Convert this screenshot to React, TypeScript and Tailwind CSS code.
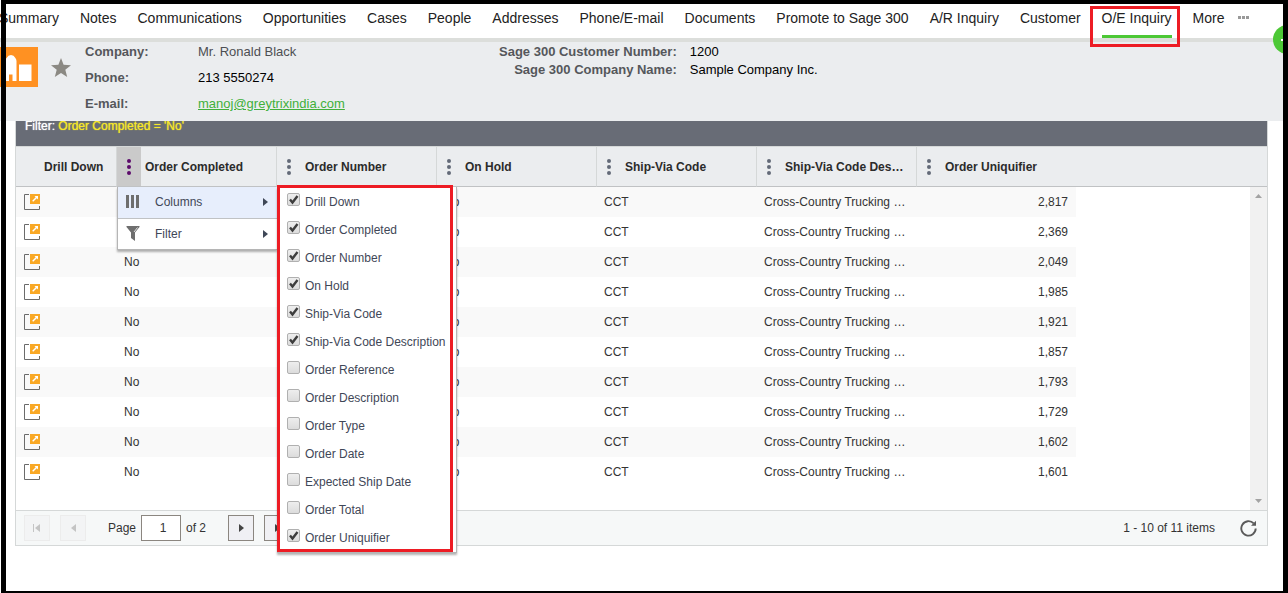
import React, { useState } from "react";

// ========== Types ==========

interface GridColumn {
  id: string;
  label: string;
  visible: boolean;
}

interface OrderRow {
  completed: string;
  onHold: string;
  shipVia: string;
  shipViaDesc: string;
  uniquifier: string;
}

// ========== Constants ==========

const TABS = [
  "Summary",
  "Notes",
  "Communications",
  "Opportunities",
  "Cases",
  "People",
  "Addresses",
  "Phone/E-mail",
  "Documents",
  "Promote to Sage 300",
  "A/R Inquiry",
  "Customer",
  "O/E Inquiry",
  "More",
];

const HEADERS = [
  "Order Completed",
  "Order Number",
  "On Hold",
  "Ship-Via Code",
  "Ship-Via Code Description",
  "Order Uniquifier",
];

const COLUMNS: GridColumn[] = [
  { id: "drill", label: "Drill Down", visible: true },
  { id: "completed", label: "Order Completed", visible: true },
  { id: "number", label: "Order Number", visible: true },
  { id: "hold", label: "On Hold", visible: true },
  { id: "via", label: "Ship-Via Code", visible: true },
  { id: "viaDesc", label: "Ship-Via Code Description", visible: true },
  { id: "reference", label: "Order Reference", visible: false },
  { id: "description", label: "Order Description", visible: false },
  { id: "type", label: "Order Type", visible: false },
  { id: "date", label: "Order Date", visible: false },
  { id: "shipDate", label: "Expected Ship Date", visible: false },
  { id: "total", label: "Order Total", visible: false },
  { id: "uniquifier", label: "Order Uniquifier", visible: true },
];

const ROWS: OrderRow[] = [
  "2,817",
  "2,369",
  "2,049",
  "1,985",
  "1,921",
  "1,857",
  "1,793",
  "1,729",
  "1,602",
  "1,601",
].map((uniquifier) => ({
  completed: "No",
  onHold: "No",
  shipVia: "CCT",
  shipViaDesc: "Cross-Country Trucking Company",
  uniquifier,
}));

// ========== Icons ==========

function CompanyIcon() {
  return (
    <svg width="38" height="40" viewBox="0 0 38 40" aria-hidden="true">
      <rect width="38" height="40" fill="#ff9122" />
      <path d="M5 34V14q0-2 2-3.500Q8 8 11 8t4 2.500q1.500 1.500 1.500 3.500v20H12.500v-6.500H9V34z" fill="#fff" />
      <rect x="19" y="17.500" width="12.500" height="16.500" fill="#fff" />
    </svg>
  );
}

function StarIcon() {
  return (
    <svg width="20" height="19" viewBox="0 0 20 19" aria-hidden="true">
      <path
        d="M10 0l2.600 6.700 7.400.500-5.700 4.600 1.900 7.200L10 15l-6.200 4 1.900-7.200L0 7.200l7.400-.500z"
        fill="#8b8983"
      />
    </svg>
  );
}

function DrillIcon() {
  return (
    <svg width="16" height="16" viewBox="0 0 16 16" aria-hidden="true">
      <path d="M5 .5H.5v15h15V12" fill="none" stroke="#6b6b6b" />
      <rect x="6" width="10" height="10" fill="#f9a825" />
      <path d="M10.500 2H14v3.500l-1.200-1.200L9.200 7.800 8.200 6.800l3.500-3.600z" fill="#fff" />
    </svg>
  );
}

function DotsIcon() {
  return (
    <svg width="4" height="16" viewBox="0 0 4 16" fill="currentColor" aria-hidden="true">
      <circle cx="2" cy="2" r="2" />
      <circle cx="2" cy="8" r="2" />
      <circle cx="2" cy="14" r="2" />
    </svg>
  );
}

function ColumnsIcon() {
  return (
    <svg width="14" height="14" viewBox="0 0 14 14" fill="#6e6e6e" aria-hidden="true">
      <path d="M0 0h3v13H0zM5 0h3v13H5zM10 0h3v13h-3z" />
    </svg>
  );
}

function FilterIcon() {
  return (
    <svg width="14" height="15" viewBox="0 0 14 15" aria-hidden="true">
      <path d="M.5 0h13v1L9 6.500V15l-4-3V6.500L.5 1z" fill="#6e6e6e" />
      <path d="M11.500 1.500L8 6" fill="none" stroke="#fff" strokeWidth=".8" />
    </svg>
  );
}

function ArrowIcon({ flip = false, bar = false }: { flip?: boolean; bar?: boolean }) {
  return (
    <svg width="8" height="8" viewBox="0 0 8 8" fill="currentColor" aria-hidden="true">
      {flip ? <path d="M7 0v8L2 4z" /> : <path d="M2 0v8l5-4z" />}
      {bar && (flip ? <path d="M0 0h1v8H0z" /> : <path d="M7 0h1v8H7z" />)}
    </svg>
  );
}

function RefreshIcon() {
  return (
    <svg width="17" height="17" viewBox="0 0 17 17" aria-hidden="true">
      <path
        d="M13.700 3.400A7.200 7.200 0 1 0 15.700 8.500"
        fill="none"
        stroke="#5a5a5a"
        strokeWidth="1.900"
      />
      <path d="M16 .8v5h-5z" fill="#5a5a5a" />
    </svg>
  );
}

// ========== Sections ==========

function TabBar() {
  return (
    <nav className="-ml-px flex h-[38px] items-start gap-[21px] whitespace-nowrap text-sm text-[#222]">
      {TABS.map((tab) =>
        tab === "O/E Inquiry" ? (
          <a
            key={tab}
            href="#"
            aria-current="page"
            className="relative h-full border-b-[3px] border-[#4cc835] pt-2"
          >
            {tab}
            <span className="pointer-events-none absolute top-[6px] -right-2 -left-3 z-10 h-[41px] border-[3px] border-[#ed1c24]" />
          </a>
        ) : (
          <a key={tab} href="#" className="pt-2">
            {tab}
          </a>
        )
      )}
      <button aria-label="More tabs" className="-ml-2 flex gap-px pt-4">
        <span className="size-[3px] bg-[#999]" />
        <span className="size-[3px] bg-[#999]" />
        <span className="size-[3px] bg-[#999]" />
      </button>
    </nav>
  );
}

function CompanyHeader() {
  return (
    <header className="relative flex min-h-[83px] border-t-4 border-[#dcdedb] bg-[#ebedef] text-[13px] text-black">
      <div className="pt-[5px]">
        <CompanyIcon />
      </div>
      <button aria-label="Favourite" className="ml-[13px] self-start pt-4">
        <StarIcon />
      </button>
      <dl className="ml-[14px] grid w-[414px] grid-cols-[113px_1fr] content-start gap-y-[6px] leading-5">
        <dt className="font-bold text-[#55575b]">Company:</dt>
        <dd className="text-[#4d4f53]">Mr. Ronald Black</dd>
        <dt className="font-bold text-[#55575b]">Phone:</dt>
        <dd>213 5550274</dd>
        <dt className="font-bold text-[#55575b]">E-mail:</dt>
        <dd>
          <a href="mailto:manoj@greytrixindia.com" className="text-[#41b03b] underline">
            manoj@greytrixindia.com
          </a>
        </dd>
      </dl>
      <dl className="grid grid-cols-[auto_auto] content-start gap-x-[13px] pt-px leading-[18px]">
        <dt className="text-right font-bold text-[#55575b]">Sage 300 Customer Number:</dt>
        <dd>1200</dd>
        <dt className="text-right font-bold text-[#55575b]">Sage 300 Company Name:</dt>
        <dd>Sample Company Inc.</dd>
      </dl>
      <button
        aria-label="New"
        className="absolute -top-[17px] -right-[14px] flex size-[29px] items-center rounded-full bg-[#4cc835] pl-2"
      >
        <span className="h-0.5 w-3 bg-white" />
      </button>
    </header>
  );
}

function ColumnMenu() {
  const [columns, setColumns] = useState(COLUMNS);

  const toggle = (id: string) => {
    setColumns((prev) =>
      prev.map((c) => (c.id === id ? { ...c, visible: !c.visible } : c))
    );
  };

  return (
    <div className="absolute top-full left-[101px] z-10 flex items-start text-[#3f4757]">
      <div className="w-40 border-b border-l border-[#b5b5b5] bg-white shadow-[0_2px_2px_rgba(0,0,0,0.3)]">
        <button className="flex h-8 w-full items-center border-b border-[#c0c2c4] bg-[#e7eefc] px-2 pb-px">
          <ColumnsIcon />
          <span className="ml-[15px] flex-1 text-left">Columns</span>
          <ArrowIcon />
        </button>
        <button className="flex h-[30px] w-full items-center px-2 pb-px">
          <FilterIcon />
          <span className="ml-[15px] flex-1 text-left">Filter</span>
          <ArrowIcon />
        </button>
      </div>
      <div className="relative w-[180px] border-r border-b border-[#b5b5b5] bg-white pt-px shadow-[0_2px_2px_rgba(0,0,0,0.3)]">
        {columns.map((c) => (
          <label
            key={c.id}
            className="flex h-7 items-center gap-[5px] pl-[10px] whitespace-nowrap"
          >
            <span className="relative mb-[6px] size-[13px]">
              <input
                type="checkbox"
                checked={c.visible}
                onChange={() => toggle(c.id)}
                className="block size-[13px] appearance-none rounded-xs border border-[#b0b0b0] bg-linear-to-b from-[#eeeeee] to-[#dcdcdc]"
              />
              {c.visible && (
                <svg
                  viewBox="0 0 13 13"
                  className="pointer-events-none absolute inset-0"
                  aria-hidden="true"
                >
                  <path d="M3 6.500l2.500 3L10.500 3" fill="none" stroke="#3d3d3d" strokeWidth="2.400" />
                </svg>
              )}
            </span>
            {c.label}
          </label>
        ))}
        <div className="pointer-events-none absolute -top-0.5 right-[3px] bottom-0 left-0 border-[3px] border-[#ed1c24]" />
      </div>
    </div>
  );
}

function OrdersGrid() {
  const [page, setPage] = useState("1");

  return (
    <section className="mr-5 ml-[15px] border border-t-0 border-[#d5d8d8] text-xs text-[#333]">
      <div className="h-[25px] bg-[#686c76] pl-[9px] leading-[10px] text-white [text-shadow:0_0_1px_currentColor]">
        Filter: <span className="text-[#f5e72b]">Order Completed = 'No'</span>
      </div>

      <div className="relative border-t border-[#d5d8d8]">
        <table className="w-full table-fixed border-separate border-spacing-0 bg-[#ebedef] text-left text-[#2b2b2b]">
          <colgroup>
            <col className="w-[100px]" />
            <col className="w-40" />
            <col className="w-40" />
            <col className="w-40" />
            <col className="w-40" />
            <col className="w-40" />
            <col />
          </colgroup>
          <thead>
            <tr>
              <th className="h-10 border-b border-[#c0c2c4] pl-7 font-bold">Drill Down</th>
              {HEADERS.map((label, i) => (
                <th key={label} className="h-10 border-b border-l border-b-[#c0c2c4] border-l-[#d5d8d8] p-0 font-bold">
                  <div className="flex h-[39px] items-center">
                    <button
                      aria-label={`${label} column settings`}
                      className={`flex h-full w-6 shrink-0 items-center justify-center ${
                        i === 0 ? "bg-[#cacaca] text-[#5c0a6b]" : "text-[#636978]"
                      }`}
                    >
                      <DotsIcon />
                    </button>
                    <span className="ml-1 truncate pr-3">{label}</span>
                  </div>
                </th>
              ))}
            </tr>
          </thead>
        </table>
        <ColumnMenu />
      </div>

      <div className="flex">
        <div className="min-w-0 flex-1 pb-[23px]">
          <table className="w-[1060px] table-fixed border-separate border-spacing-0">
            <colgroup>
              <col className="w-[100px]" />
              <col className="w-40" />
              <col className="w-40" />
              <col className="w-40" />
              <col className="w-40" />
              <col className="w-40" />
              <col className="w-40" />
            </colgroup>
            <tbody>
              {ROWS.map((row) => (
                <tr key={row.uniquifier} className="odd:bg-[#f9f9f9]">
                  <td className="h-[30px] px-2">
                    <a href="#" aria-label="Drill down" className="block w-4">
                      <DrillIcon />
                    </a>
                  </td>
                  <td className="px-2">{row.completed}</td>
                  <td className="px-2"></td>
                  <td className="px-2">{row.onHold}</td>
                  <td className="px-2">{row.shipVia}</td>
                  <td className="truncate px-2">{row.shipViaDesc}</td>
                  <td className="px-2 text-right">{row.uniquifier}</td>
                </tr>
              ))}
            </tbody>
          </table>
        </div>
        <div className="flex w-[17px] flex-col items-center justify-between bg-[#f1f1f1] py-[7px]">
          <svg width="7" height="4" viewBox="0 0 7 4" fill="#a3a3a3" aria-hidden="true">
            <path d="M0 4h7L3.500 0z" />
          </svg>
          <svg width="7" height="4" viewBox="0 0 7 4" fill="#a3a3a3" aria-hidden="true">
            <path d="M0 0h7L3.500 4z" />
          </svg>
        </div>
      </div>

      <div className="flex h-[35px] items-center border-t border-[#d5d8d8] bg-[#f6f8f8] pr-[10px] pl-2">
        <button
          disabled
          aria-label="First page"
          className="flex size-[26px] items-center justify-center border border-[#ececec] bg-[#f3f4f5] text-[#c4c4c4]"
        >
          <ArrowIcon flip bar />
        </button>
        <button
          disabled
          aria-label="Previous page"
          className="ml-[10px] flex size-[26px] items-center justify-center border border-[#ececec] bg-[#f3f4f5] text-[#c4c4c4]"
        >
          <ArrowIcon flip />
        </button>
        <label className="ml-[22px] flex items-center gap-[5px]">
          Page
          <input
            type="text"
            value={page}
            onChange={(e) => setPage(e.target.value)}
            className="h-[26px] w-10 border border-[#8b8680] bg-white pl-1 text-center"
          />
        </label>
        <span className="ml-[5px]">of 2</span>
        <button
          aria-label="Next page"
          className="ml-[22px] flex size-[26px] items-center justify-center border border-[#8b8680] bg-[#f0f0f4] text-[#444]"
        >
          <ArrowIcon />
        </button>
        <button
          aria-label="Last page"
          className="ml-[10px] flex size-[26px] items-center justify-center border border-[#8b8680] bg-[#f0f0f4] text-[#444]"
        >
          <ArrowIcon bar />
        </button>
        <span className="ml-auto">1 - 10 of 11 items</span>
        <button aria-label="Refresh" className="ml-[25px]">
          <RefreshIcon />
        </button>
      </div>
    </section>
  );
}

// ========== Main Component ==========

export default function App() {
  return (
    <div className="relative min-h-screen overflow-hidden bg-white font-['Liberation_Sans',Arial,sans-serif]">
      <TabBar />
      <CompanyHeader />
      <OrdersGrid />
      {/* page frame, drawn over the content */}
      <div className="pointer-events-none absolute inset-y-0 right-0 left-px z-20 border-t-4 border-r-[5px] border-b-2 border-l-[5px] border-black" />
    </div>
  );
}
